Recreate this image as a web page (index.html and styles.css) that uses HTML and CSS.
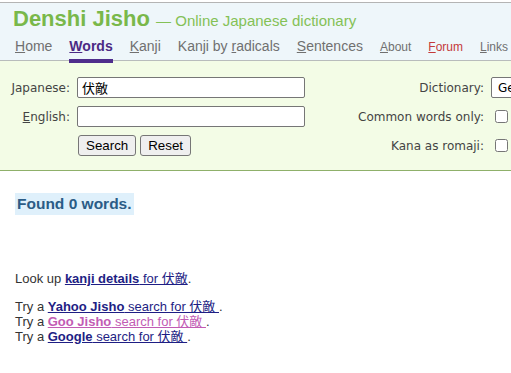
FILE: index.html
```html
<!DOCTYPE html>
<html lang="en">
<head>
    <meta charset="UTF-8">
    <meta name="viewport" content="width=device-width, initial-scale=1.0">
    <title>Denshi Jisho - Words</title>
    <link rel="stylesheet" href="styles.css">
</head>
<body>
    <div class="header">
        <h1 class="title">Denshi Jisho <span class="tagline">&mdash; Online Japanese dictionary</span></h1>
        <ul class="nav">
            <li><a href="#"><u>H</u>ome</a></li>
            <li><a href="#" class="active"><u>W</u>ords</a></li>
            <li><a href="#"><u>K</u>anji</a></li>
            <li><a href="#">Kanji by <u>r</u>adicals</a></li>
            <li><a href="#"><u>S</u>entences</a></li>
            <li class="small"><a href="#"><u>A</u>bout</a></li>
            <li class="small"><a href="#" class="forum"><u>F</u>orum</a></li>
            <li class="small"><a href="#"><u>L</u>inks</a></li>
        </ul>
    </div>

    <form class="search">
        <label for="jap"><u>J</u>apanese:</label>
        <input type="text" id="jap" value="伏敵">
        <label for="dict">Dictionary:</label>
        <select id="dict"><option>General dictionary</option></select>

        <label for="eng"><u>E</u>nglish:</label>
        <input type="text" id="eng">
        <label for="common">Common words only:</label>
        <div class="check"><input type="checkbox" id="common"></div>

        <span></span>
        <div class="buttons">
            <button type="button">Search</button>
            <button type="reset">Reset</button>
        </div>
        <label for="romaji">Kana as romaji:</label>
        <div class="check"><input type="checkbox" id="romaji"></div>
    </form>

    <div class="content">
        <div class="found">Found 0 words.</div>

        <p class="lookup">Look up <a href="#"><b>kanji details</b> for 伏敵</a>.</p>

        <p class="try">
            Try a <a href="#"><b>Yahoo Jisho</b> search for 伏敵 </a>.<br>
            Try a <a href="#" class="visited"><b>Goo Jisho</b> search for 伏敵 </a>.<br>
            Try a <a href="#"><b>Google</b> search for 伏敵 </a>.
        </p>
    </div>
</body>
</html>
```

FILE: styles.css
```css
body {
    margin: 0;
    padding: 0;
    font-family: "Liberation Sans", Arial, "Noto Sans CJK JP", sans-serif;
    background-color: #fff;
    color: #333;
    overflow: hidden;
}

.header {
    margin-top: 2px;
    border-top: 1px solid #b4b4b4;
    border-bottom: 1px solid #b8bcbc;
    background-color: #eef6fa;
    padding: 3px 0 0 13px;
}

.title {
    margin: 0;
    font-size: 22px;
    line-height: 26px;
    font-weight: bold;
    color: #79b84a;
}

.tagline {
    font-size: 15px;
    font-weight: normal;
    color: #84c156;
}

.nav {
    list-style: none;
    margin: 4px 0 0 2px;
    padding: 0;
    display: flex;
    align-items: baseline;
    gap: 17px;
}

.nav a {
    display: block;
    position: relative;
    font-size: 14px;
    line-height: 16px;
    padding-bottom: 5px;
    color: #707070;
    text-decoration: none;
}

.nav .small a {
    font-size: 12px;
}

.nav a.active {
    color: #4b2a84;
    font-weight: bold;
}

.nav a.active::after {
    content: "";
    position: absolute;
    left: 0;
    right: 0;
    top: 100%;
    height: 4px;
    background-color: #4f2d8c;
}

.nav a.forum {
    color: #c43a3a;
}

/* search form */
.search {
    display: grid;
    grid-template-columns: 70px 228px 172px 120px;
    grid-template-rows: 21px 21px 21px;
    column-gap: 7px;
    row-gap: 8px;
    padding: 16px 0 14px 0;
    background-color: #f3fce6;
    border-bottom: 1px solid #8fb06a;
    overflow: hidden;
}

.search label {
    font-family: "DejaVu Sans", Verdana, sans-serif;
    font-size: 12px;
    color: #444;
    text-align: right;
    align-self: center;
    white-space: nowrap;
}

.search input[type="text"] {
    box-sizing: border-box;
    height: 21px;
    margin: 0;
    padding: 1px 4px;
    border: 1px solid #767676;
    border-radius: 2px;
    background-color: #fff;
    font-family: "Noto Sans CJK JP", "Liberation Sans", sans-serif;
    font-size: 13px;
    color: #000;
}

.search select {
    box-sizing: border-box;
    width: 160px;
    height: 21px;
    margin: 0;
    padding: 0 2px;
    border: 1px solid #767676;
    border-radius: 2px;
    background-color: #fff;
    font-family: "DejaVu Sans", Verdana, sans-serif;
    font-size: 12px;
    color: #000;
}

.check {
    display: flex;
    align-items: center;
}

.check input {
    width: 13px;
    height: 13px;
    margin: 0 0 0 4px;
}

.buttons {
    display: flex;
    gap: 4px;
    padding-left: 1px;
}

.buttons button {
    height: 21px;
    padding: 1px 7px;
    border: 1px solid #767676;
    border-radius: 3px;
    background-color: #efefef;
    font-family: "Liberation Sans", Arial, sans-serif;
    font-size: 13.33px;
    color: #000;
}

/* results */
.content {
    padding-left: 15px;
    font-size: 13px;
    line-height: 15px;
}

.found {
    display: inline-block;
    margin-top: 22px;
    padding: 2px 2px;
    background-color: #dff0fb;
    color: #2b5c86;
    font-size: 15.5px;
    line-height: 18px;
    font-weight: bold;
}

.lookup {
    margin: 56px 0 13px 0;
}

.try {
    margin: 0;
}

.content a {
    color: #1e1e84;
}

.content a.visited {
    color: #c25cb4;
}
```
